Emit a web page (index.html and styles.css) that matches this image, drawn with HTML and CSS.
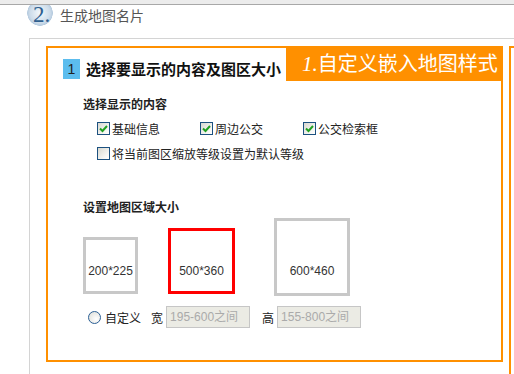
FILE: index.html
```html
<!DOCTYPE html>
<html lang="zh-CN">
<head>
    <meta charset="UTF-8">
    <title>生成地图名片</title>
    <link rel="stylesheet" href="styles.css">
</head>
<body>
    <div class="topbar"></div>

    <div class="step">
        <span class="step-num">2.</span>
        <span class="step-title">生成地图名片</span>
    </div>

    <div class="outer">
        <div class="panels">
            <div class="panel">
                <div class="panel-head">
                    <h2 class="panel-title"><span class="badge">1</span>选择要显示的内容及图区大小</h2>
                    <div class="tab"><i>1.</i>自定义嵌入地图样式</div>
                </div>

                <div class="section">
                    <h3>选择显示的内容</h3>
                    <div class="check-row first">
                        <label class="check"><span class="box on"><svg width="11" height="11" viewBox="0 0 11 11"><path d="M2 5.5 L4.5 8 L9 3" /></svg></span>基础信息</label>
                        <label class="check"><span class="box on"><svg width="11" height="11" viewBox="0 0 11 11"><path d="M2 5.5 L4.5 8 L9 3" /></svg></span>周边公交</label>
                        <label class="check"><span class="box on"><svg width="11" height="11" viewBox="0 0 11 11"><path d="M2 5.5 L4.5 8 L9 3" /></svg></span>公交检索框</label>
                    </div>
                    <div class="check-row">
                        <label class="check wide"><span class="box"></span>将当前图区缩放等级设置为默认等级</label>
                    </div>
                </div>

                <div class="section second">
                    <h3>设置地图区域大小</h3>
                    <div class="sizes">
                        <div class="size s1">200*225</div>
                        <div class="size s2">500*360</div>
                        <div class="size s3">600*460</div>
                    </div>
                    <div class="custom">
                        <span class="radio"></span>
                        <span class="radio-label">自定义</span>
                        <span class="dim">宽</span>
                        <input class="field" type="text" placeholder="195-600之间" disabled>
                        <span class="dim">高</span>
                        <input class="field" type="text" placeholder="155-800之间" disabled>
                    </div>
                </div>
            </div>
            <div class="panel-next"></div>
        </div>
    </div>
</body>
</html>
```

FILE: styles.css
```css
body {
    margin: 0;
    overflow: hidden;
    font-family: "Liberation Sans", "Noto Sans CJK SC", sans-serif;
    font-size: 12px;
    color: #222;
    background: #fff;
}

.topbar {
    height: 4px;
    background: #ececec;
    border-bottom: 1px solid #a8a8a8;
}

.step {
    display: flex;
    align-items: flex-start;
    height: 33px;
    padding-left: 27px;
}

.step-num {
    box-sizing: border-box;
    width: 26px;
    height: 22px;
    padding-left: 6px;
    background: radial-gradient(circle 13px at 13px 8px, #f4f8fb 0, #cddcea 10px, #b6cbdf 12.5px, transparent 13px);
    font-family: "Liberation Serif", serif;
    font-size: 23px;
    line-height: 20px;
    color: #2f5f8f;
}

.step-title {
    margin-left: 7px;
    font-family: "Noto Sans CJK SC", sans-serif;
    font-size: 14px;
    line-height: 20px;
    color: #555;
}

.outer {
    margin-left: 29px;
    border-top: 1px solid #d4d4d4;
    border-left: 1px solid #d4d4d4;
    padding: 7px 0 0 16px;
}

.panels {
    display: flex;
    align-items: flex-start;
    gap: 6px;
}

.panel {
    box-sizing: border-box;
    flex: 0 0 457px;
    border: 2px solid #ff9000;
    padding-bottom: 32px;
}

.panel-next {
    flex: 1;
    height: 326px;
    border-left: 2px solid #ff9000;
    border-top: 2px solid #ff9000;
}

.panel-head {
    display: flex;
    justify-content: space-between;
    height: 33px;
}

.panel-title {
    display: flex;
    align-items: center;
    margin: 9px 0 0 15px;
    font-family: "Noto Sans CJK SC", sans-serif;
    font-size: 15px;
    line-height: 20px;
    font-weight: bold;
    color: #111;
}

.badge {
    width: 17px;
    height: 20px;
    margin-right: 6px;
    background: #5cbdee;
    color: #222;
    font-family: "Liberation Sans", sans-serif;
    font-size: 14px;
    font-weight: normal;
    text-align: center;
}

.tab {
    width: 215px;
    height: 33px;
    padding-left: 16px;
    box-sizing: border-box;
    background: #ff9000;
    color: #fff;
    font-family: "Noto Sans CJK SC", sans-serif;
    font-size: 20px;
    line-height: 30px;
    white-space: nowrap;
}

.tab i {
    font-family: "Liberation Serif", serif;
    font-size: 21px;
}

.section {
    padding-left: 35px;
}

.section h3 {
    margin: 15px 0 0;
    font-family: "Noto Sans CJK SC", sans-serif;
    font-size: 12px;
    line-height: 16px;
    font-weight: bold;
    color: #222;
}

.section.second h3 {
    margin-top: 33px;
}

.check-row {
    display: flex;
    height: 25px;
    padding-left: 14px;
}

.check-row.first {
    margin-top: 4px;
}

.check {
    display: flex;
    align-items: center;
    width: 103px;
    font-family: "Noto Sans CJK SC", sans-serif;
    font-size: 12px;
    color: #222;
}

.check.wide {
    width: auto;
}

.box {
    box-sizing: border-box;
    width: 13px;
    height: 13px;
    margin-right: 2px;
    border: 1px solid #1c5180;
    background: linear-gradient(135deg, #d8d8d0, #f6f6f3 70%, #fff);
    display: flex;
    align-items: center;
    justify-content: center;
}

.box svg path {
    fill: none;
    stroke: #21a121;
    stroke-width: 2;
}

.sizes {
    display: flex;
    align-items: flex-end;
    height: 78px;
    margin-top: 3px;
}

.size {
    box-sizing: border-box;
    display: flex;
    flex-direction: column;
    justify-content: flex-end;
    align-items: center;
    border: 3px solid #c8c8c8;
    padding-bottom: 13px;
    font-size: 12px;
    line-height: 14px;
    color: #333;
}

.s1 {
    width: 55px;
    height: 57px;
    margin-bottom: 2px;
}

.s2 {
    width: 67px;
    height: 66px;
    margin: 0 0 2px 30px;
    border-color: #f00;
}

.s3 {
    width: 76px;
    height: 78px;
    margin-left: 39px;
    padding-bottom: 15px;
}

.custom {
    display: flex;
    align-items: center;
    height: 22px;
    margin-top: 10px;
}

.radio {
    box-sizing: border-box;
    width: 13px;
    height: 13px;
    margin-left: 5px;
    border: 1px solid #2b5f95;
    border-radius: 50%;
    background: radial-gradient(circle at 65% 65%, #fff, #dcdcd6);
}

.radio-label {
    margin-left: 4px;
    font-family: "Noto Sans CJK SC", sans-serif;
}

.dim {
    margin-left: 10px;
    font-family: "Noto Sans CJK SC", sans-serif;
}

.dim + .field {
    margin-left: 3px;
}

.field + .dim {
    margin-left: 12px;
}

.field {
    box-sizing: border-box;
    width: 84px;
    height: 22px;
    padding: 0 3px;
    border: 1px solid #c6c6c6;
    background: #ebebe4;
    font-family: "Liberation Sans", "Noto Sans CJK SC", sans-serif;
    font-size: 12px;
}

.field::placeholder {
    color: #aaa;
}
```
